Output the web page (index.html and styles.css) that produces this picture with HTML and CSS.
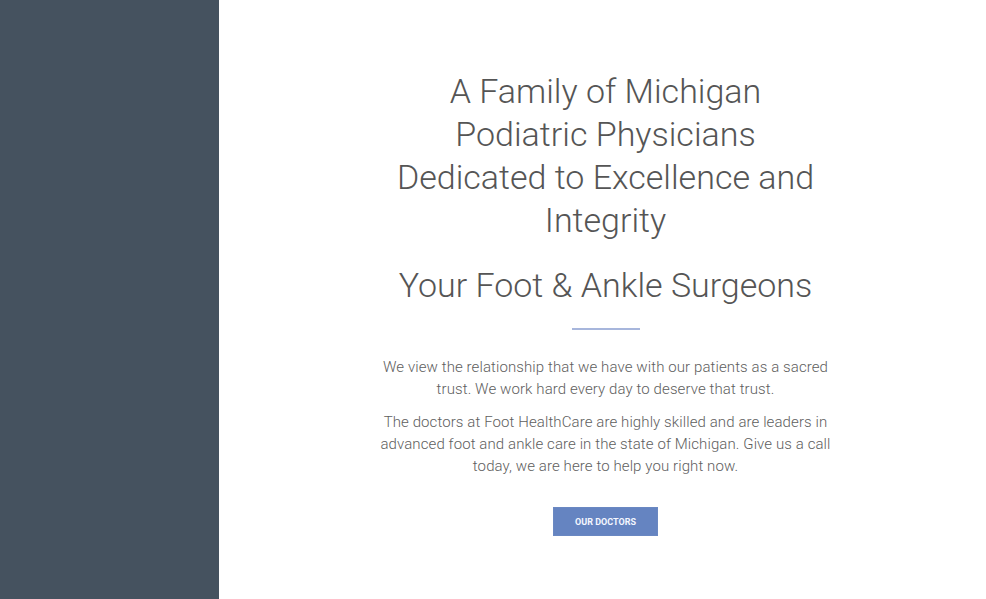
FILE: index.html
```html
<!DOCTYPE html>
<html>
<head>
<meta charset="utf-8">
<link rel="stylesheet" href="styles.css">
</head>
<body>
<div class="layout">
  <aside class="sidebar"></aside>
  <main class="main">
    <section class="intro">
      <h1 class="title">A Family of Michigan Podiatric Physicians Dedicated to Excellence and Integrity</h1>
      <h2 class="subtitle">Your Foot &amp; Ankle Surgeons</h2>
      <div class="divider"></div>
      <p class="text">We view the relationship that we have with our patients as a sacred trust. We work hard every day to deserve that trust.</p>
      <p class="text">The doctors at Foot HealthCare are highly skilled and are leaders in advanced foot and ankle care in the state of Michigan. Give us a call today, we are here to help you right now.</p>
      <a class="button" href="#">Our Doctors</a>
    </section>
  </main>
</div>
</body>
</html>
```
FILE: styles.css
```css
* { box-sizing: border-box; }
html, body { margin: 0; padding: 0; height: 100%; }
body { font-family: Roboto, "Liberation Sans", sans-serif; background: #fff; }
.layout { display: flex; height: 599px; }
.sidebar { width: 219px; flex: none; background: #45525f; }
.main { flex: 1; display: flex; justify-content: center; }
.intro { width: 462px; padding-top: 70px; display: flex; flex-direction: column; align-items: center; text-align: center; margin-left: 6px; }
.title { margin: 0; max-width: 436px; font-weight: 300; font-size: 34px; line-height: 43px; color: #555; }
.subtitle { margin: 22px 0 0; font-weight: 300; font-size: 34px; line-height: 43px; color: #555; }
.divider { width: 68px; height: 2px; background: #a7b6dc; margin-top: 21px; }
.text { margin: 26px 0 0; font-weight: 300; font-size: 15px; line-height: 22px; letter-spacing: 0.1px; color: #5e5e5e; }
.text + .text { margin-top: 11px; }
.button { margin-top: 30px; width: 105px; height: 29px; display: flex; align-items: center; justify-content: center; background: #6584c1; color: #f4f7ff; font-size: 9px; font-weight: 700; text-transform: uppercase; text-decoration: none; border: 1px solid #6a88c2; }
```
